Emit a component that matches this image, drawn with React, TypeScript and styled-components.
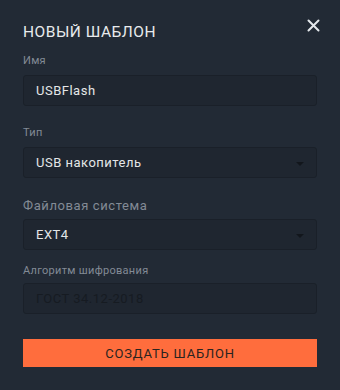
import React from 'react';
import styled, { createGlobalStyle } from 'styled-components';

const GlobalStyle = createGlobalStyle`
  html, body {
    margin: 0;
    padding: 0;
    background: #222a35;
  }
  * {
    box-sizing: border-box;
  }
`;

const Dialog = styled.div`
  position: relative;
  width: 340px;
  height: 390px;
  background: #222a35;
  padding: 21px 23px 0 23px;
  font-family: Roboto, 'Noto Sans', sans-serif;
  display: flex;
  flex-direction: column;
`;

const Title = styled.h1`
  margin: 0 0 11px 0;
  font-size: 15.5px;
  font-weight: 400;
  letter-spacing: 0.5px;
  color: #e8eaec;
  line-height: 22px;
`;

const CloseButton = styled.button`
  position: absolute;
  top: 17px;
  right: 19px;
  width: 16px;
  height: 16px;
  padding: 0;
  border: none;
  background: none;
  display: flex;
  align-items: center;
  justify-content: center;
  cursor: pointer;
`;

const Field = styled.div<{ $gap: number }>`
  display: flex;
  flex-direction: column;
  margin-bottom: ${(p) => p.$gap}px;
`;

const Label = styled.label<{ $size: number; $spacing?: number; $mb?: number }>`
  font-size: ${(p) => p.$size}px;
  color: #838b96;
  letter-spacing: ${(p) => p.$spacing ?? 0.3}px;
  line-height: 14px;
  margin-bottom: ${(p) => p.$mb ?? 7}px;
`;

const Box = styled.div<{ $disabled?: boolean }>`
  position: relative;
  height: 31px;
  border: 1px solid #1a2029;
  border-radius: 3px;
  background: #1f2630;
  display: flex;
  align-items: center;
  padding: 0 12px;
  font-size: 13px;
  letter-spacing: 0.5px;
  color: ${(p) => (p.$disabled ? '#161b22' : '#e4e6e8')};
`;

const Caret = styled.span`
  position: absolute;
  right: 12px;
  top: 14px;
  width: 0;
  height: 0;
  border-left: 4px solid transparent;
  border-right: 4px solid transparent;
  border-top: 4px solid #12161c;
`;

const SubmitButton = styled.button`
  margin-top: 25px;
  height: 28px;
  width: 100%;
  border: none;
  border-radius: 0;
  background: #ff6d3d;
  color: #2a2420;
  font-family: Roboto, 'Noto Sans', sans-serif;
  font-size: 13px;
  letter-spacing: 0.8px;
  cursor: pointer;
`;

const App: React.FC = () => {
  return (
    <>
      <GlobalStyle />
      <Dialog>
        <Title>НОВЫЙ ШАБЛОН</Title>
        <CloseButton aria-label="Закрыть">
          <svg width="13" height="13" viewBox="0 0 13 13">
            <path d="M1.5 1.5 L11.5 11.5 M11.5 1.5 L1.5 11.5" stroke="#e4e8ec" strokeWidth="2" strokeLinecap="round" />
          </svg>
        </CloseButton>
        <Field $gap={20}>
          <Label $size={11}>Имя</Label>
          <Box>USBFlash</Box>
        </Field>
        <Field $gap={21}>
          <Label $size={11}>Тип</Label>
          <Box>
            USB накопитель
            <Caret />
          </Box>
        </Field>
        <Field $gap={14}>
          <Label $size={13} $spacing={0.6} $mb={6}>
            Файловая система
          </Label>
          <Box>
            EXT4
            <Caret />
          </Box>
        </Field>
        <Field $gap={0}>
          <Label $size={11} $mb={5}>
            Алгоритм шифрования
          </Label>
          <Box $disabled>ГОСТ 34.12-2018</Box>
        </Field>
        <SubmitButton>СОЗДАТЬ ШАБЛОН</SubmitButton>
      </Dialog>
    </>
  );
};

export default App;
